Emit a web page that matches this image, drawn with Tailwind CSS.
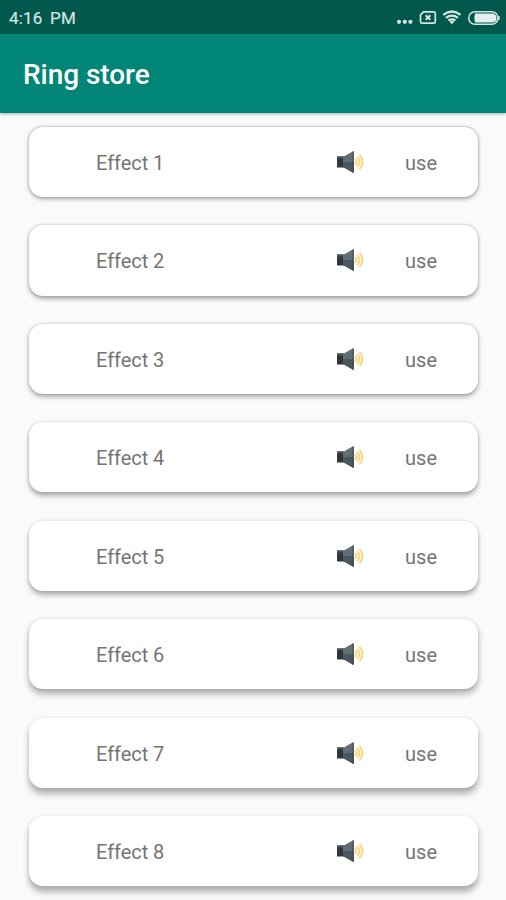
<!DOCTYPE html>
<html lang="en">
<head>
<meta charset="utf-8">
<title>Ring store</title>
<script src="https://cdn.jsdelivr.net/npm/@tailwindcss/browser@4"></script>
</head>
<body class="h-[900px] w-[506px] overflow-hidden bg-[#fafafa] font-['Roboto',sans-serif]">
<header class="relative z-10 h-[113px] bg-[#008577] shadow-[0_1px_3px_rgba(0,0,0,0.32)]">
  <div class="flex h-[34px] items-center justify-between bg-[#00574b] pl-[9px] pr-[6px] pt-[2px] text-[#d5e5e2]">
    <span class="text-[17px] leading-5 tracking-[0.2px] [-webkit-text-stroke:0.2px_currentColor] [word-spacing:3px]">4:16 PM</span>
    <svg class="h-5 w-[104px]" viewBox="0 0 104 20" fill="none" stroke="currentColor">
      <g fill="currentColor" stroke="none"><circle cx="3" cy="13.800" r="2.100"/><circle cx="8.800" cy="13.800" r="2.100"/><circle cx="14.400" cy="13.800" r="2.100"/></g>
      <path d="M27.500 3.800h10.300q1.500 0 1.500 1.500v8.400q0 1.500-1.500 1.500H26q-1.500 0-1.500-1.500V6.800z" stroke-width="1.700"/>
      <path d="M29.700 7.300l4.600 4.400m0-4.400l-4.600 4.400" stroke-width="2"/>
      <path d="M47.200 6.900q8.700-6.800 17.400 0M49.800 9.800q6.100-4.500 12.200 0M52.400 12.500q3.500-2.400 7 0" stroke-width="2.200"/>
      <path d="M53.600 13.500q2.300-1.300 4.600 0L55.900 16.500z" fill="currentColor" stroke="none"/>
      <rect x="72.700" y="3.700" width="29.300" height="12.600" rx="6.300" stroke-width="1.500"/>
      <path d="M79 5.500h17q4.500 0 4.500 4.500t-4.500 4.500h-17q-1.500-4.500 0-9z" fill="#e4efed" stroke="none"/>
      <path d="M103 8v4" stroke-width="1.400"/>
    </svg>
  </div>
  <div class="flex h-[79px] items-center pl-[23px] pt-[3px]">
    <h1 class="text-[28px] font-medium leading-8 tracking-[-0.05px] text-white">Ring store</h1>
  </div>
</header>
<main id="list" class="flex flex-col gap-[28.2px] pl-[29px] pr-[28px] pt-[13.900px]"></main>
<template id="row">
  <article class="flex h-[70.25px] shrink-0 items-center rounded-[14px] bg-white pl-[67px] pr-[41px] text-[20px] leading-6 text-[#757575]">
    <span class="name flex-1 pt-[2px] tracking-[-0.05px]"></span>
    <svg class="mr-[41px] h-[26px] w-[28px]" viewBox="0 0 28 26">
      <path d="M1 7.500h7v11H1z" fill="#30363b"/>
      <path d="M1 7.500h7v2H1z" fill="#495157"/>
      <path d="M7 8L17.500 2v22L7 18z" fill="#626d74"/>
      <path d="M7 13h10.500v11L7 18z" fill="#4b565e"/>
      <path d="M16.700 2.500h1v21h-1z" fill="#303a42"/>
      <g fill="none" stroke="#fcd77d" stroke-width="2" stroke-linecap="round"><path d="M19.600 10.500q1.500 2.500 0 5M21.800 8.500q3 4.500 0 9M24 6.500q5 6.500 0 13"/></g>
    </svg>
    <span class="pt-[2px]">use</span>
  </article>
</template>
<script>
const list = document.getElementById('list');
const row = document.getElementById('row');
for (let i = 1; i <= 8; i++) {
  const item = row.content.cloneNode(true);
  item.querySelector('.name').textContent = 'Effect ' + i;
  // The overhead light casts a longer shadow on cards further down the screen.
  const y = 1 + i * 0.6;
  item.querySelector('article').style.boxShadow =
    `0 ${y}px ${4 + i * 0.35}px rgba(0,0,0,0.3), 0 0 3px rgba(0,0,0,${0.25 - i * 0.022})`;
  list.appendChild(item);
}
</script>
</body>
</html>
